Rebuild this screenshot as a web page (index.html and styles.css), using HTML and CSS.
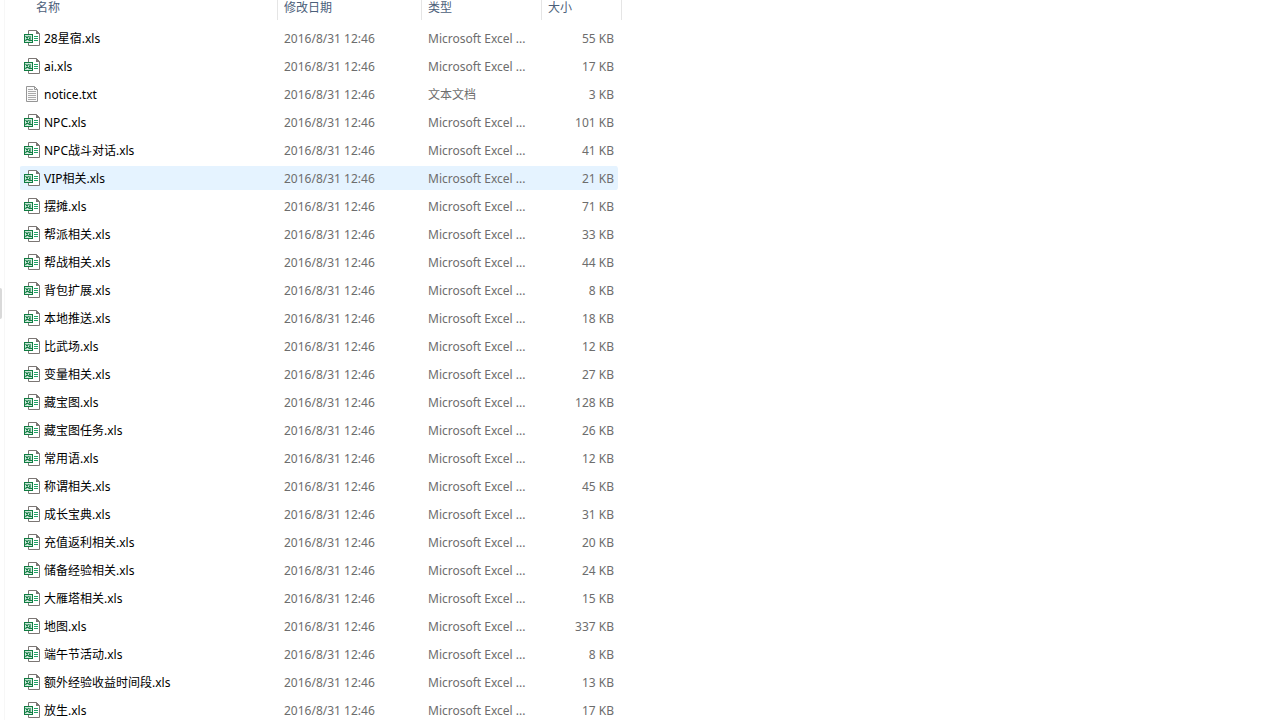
FILE: index.html
```html
<!DOCTYPE html>
<html lang="zh-CN">
<head>
<meta charset="utf-8">
<title>文件列表</title>
<link rel="stylesheet" href="styles.css">
</head>
<body>
<svg class="sprite" aria-hidden="true">
  <symbol id="xls" viewBox="0 0 16 16">
    <path d="M4.500 .5H12.500L15.500 3.500V15.500H4.500Z" fill="#fff" stroke="#7b7674"/>
    <path d="M12 0L16 4H12Z" fill="#7b7674"/>
    <path d="M10 6.500H14M10 8.500H14M10 10.500H14" stroke="#21a366"/>
    <rect x="0" y="4" width="9" height="9" fill="#107c41"/>
    <rect x="1" y="5" width="7" height="7" fill="#d3eadf"/>
    <path d="M1.500 6L5.500 11M4.500 6L1.500 11M6 6V10.500H8M5 8.500H6" fill="none" stroke="#107c41" stroke-width="1.200"/>
  </symbol>
  <symbol id="txt" viewBox="0 0 16 16">
    <path d="M2.500 .5H10.500L13.500 3.500V15.500H2.500Z" fill="#fafafa" stroke="#969696"/>
    <path d="M10.500 .5V3.500H13.500" fill="none" stroke="#969696"/>
    <path d="M4 3.500H9M4 5.500H12M4 7.500H12M4 9.500H12M4 11.500H12M4 13.500H12" stroke="#aaa"/>
  </symbol>
</svg>
<div class="explorer">
  <aside class="nav-pane"><span class="thumb"></span></aside>
  <main class="content">
    <table class="files">
      <colgroup><col class="col-name"><col class="col-date"><col class="col-type"><col class="col-size"></colgroup>
      <thead>
        <tr><th class="name"><span class="head">名称</span></th><th><span class="head">修改日期</span></th><th><span class="head">类型</span></th><th><span class="head">大小</span></th></tr>
      </thead>
      <tbody id="rows"></tbody>
    </table>
  </main>
</div>
<script src="files.js"></script>
</body>
</html>
```
FILE: styles.css
```css
* { box-sizing: border-box; }
body {
  margin: 0;
  background: #fff;
  color: #000;
  font: 12px/16px "Noto Sans", "Noto Sans CJK SC", sans-serif;
}
.sprite { display: none; }
.explorer { display: flex; height: 100vh; overflow: hidden; }
.nav-pane {
  flex: 0 0 5px;
  display: flex;
  align-items: flex-start;
  padding-top: 40vh;
  border-right: 1px solid #f7f7f7;
}
.thumb { width: 2px; height: 31px; background: #d9d9d9; border-radius: 0 2px 2px 0; }
.content { flex: 1; min-width: 0; padding-left: 15px; }
.files { width: 602px; table-layout: fixed; border-collapse: separate; border-spacing: 0; }
.col-name { width: 258px; }
.col-date { width: 144px; }
.col-type { width: 120px; }
.col-size { width: 80px; }
th { padding: 0 0 4px; text-align: left; font-weight: 400; color: #4c607a; }
.head { display: block; height: 20px; padding-left: 6px; line-height: 16px; border-right: 1px solid #e5e5e5; }
.name .head { padding-left: 16px; }
td {
  height: 28px;
  padding: 2px 0 0 6px;
  border: 0 solid transparent;
  border-width: 2px 0;
  background-clip: padding-box;
  color: #6d6d6d;
  white-space: nowrap;
}
td:first-child { padding-left: 4px; border-radius: 3px 0 0 3px; }
td:last-child { padding: 2px 4px 0 0; border-right-width: 4px; border-radius: 0 6px 6px 0; text-align: right; }
.file { display: flex; align-items: center; gap: 4px; color: #000; }
.icon { flex: none; width: 16px; height: 16px; margin: -2px 0 0; }
.hover td { background-color: #e5f3ff; }
```
FILE: files.js
```js
const files = [
  ["28星宿.xls", 55], ["ai.xls", 17], ["notice.txt", 3], ["NPC.xls", 101],
  ["NPC战斗对话.xls", 41], ["VIP相关.xls", 21], ["摆摊.xls", 71], ["帮派相关.xls", 33],
  ["帮战相关.xls", 44], ["背包扩展.xls", 8], ["本地推送.xls", 18], ["比武场.xls", 12],
  ["变量相关.xls", 27], ["藏宝图.xls", 128], ["藏宝图任务.xls", 26], ["常用语.xls", 12],
  ["称谓相关.xls", 45], ["成长宝典.xls", 31], ["充值返利相关.xls", 20], ["储备经验相关.xls", 24],
  ["大雁塔相关.xls", 15], ["地图.xls", 337], ["端午节活动.xls", 8], ["额外经验收益时间段.xls", 13],
  ["放生.xls", 17]
];
const types = { xls: "Microsoft Excel ...", txt: "文本文档" };
document.getElementById("rows").innerHTML = files.map(([name, size]) => {
  const ext = name.split(".").pop();
  const state = name === "VIP相关.xls" ? ' class="hover"' : "";
  return `<tr${state}><td><span class="file"><svg class="icon" aria-hidden="true"><use href="#${ext}"/></svg>${name}</span></td>` +
    `<td>2016/8/31 12:46</td><td>${types[ext]}</td><td>${size} KB</td></tr>`;
}).join("");
```
